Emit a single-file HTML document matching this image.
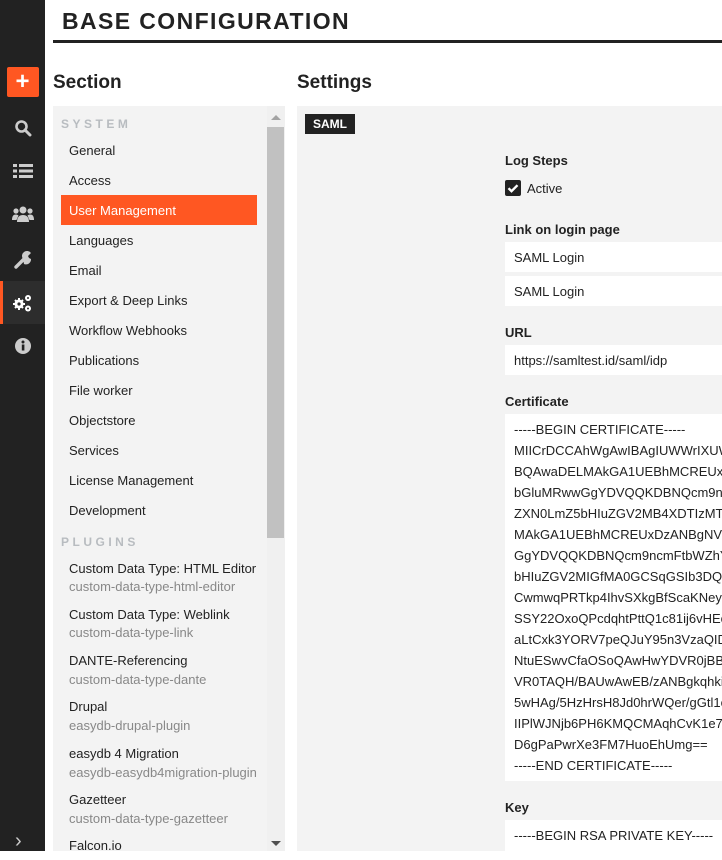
<!DOCTYPE html>
<html><head><meta charset="utf-8"><style>
*{box-sizing:border-box;margin:0;padding:0}
body{width:722px;height:851px;overflow:hidden;background:#fff;font-family:"Liberation Sans",sans-serif;color:#222;position:relative;font-size:13px}
.side{position:absolute;left:0;top:0;width:45px;height:851px;background:#222}
.ic{position:absolute;left:0;width:45px;height:43px;display:flex;align-items:center;justify-content:center}
.a{position:absolute;white-space:nowrap}
h1{position:absolute;left:62px;top:8px;font-size:23px;font-weight:bold;letter-spacing:1.4px}
.rule{position:absolute;left:53px;top:40px;width:669px;height:3px;background:#222}
h2{position:absolute;top:72px;font-size:19px;font-weight:bold}
.sec{position:absolute;left:53px;top:106px;width:232px;height:745px;background:#f3f3f3;overflow:hidden}
.it{position:absolute;left:16px;font-size:13px;margin-top:1px}
.grp{position:absolute;left:8px;font-size:12px;font-weight:bold;letter-spacing:3.5px;color:#b8bcc0;margin-top:1px}
.sub{color:#888}
.set{position:absolute;left:297px;top:106px;width:425px;height:745px;background:#f3f3f3}
.lbl{position:absolute;left:208px;font-weight:bold;font-size:13px;margin-top:1px}
.inp{position:absolute;left:208px;width:230px;background:#fff;padding-left:9px;font-size:13px}
</style></head><body>
<div class="side">
 <div class="ic" style="top:60px"><div style="width:32px;height:30px;background:#ff5722;border-radius:2px;color:#fff;font-weight:bold;font-size:24px;line-height:30px;text-align:center">+</div></div>
 <div class="ic" style="top:106px"><svg width="18" height="18" viewBox="0 0 18 18"><circle cx="7.5" cy="7.5" r="5" fill="none" stroke="#ccc" stroke-width="2.6"/><path d="M11 11l5 5" stroke="#ccc" stroke-width="3" stroke-linecap="round"/></svg></div>
 <div class="ic" style="top:149px"><svg width="20" height="16" viewBox="0 0 20 16"><g fill="#ccc"><rect x="0" y="1" width="4" height="3"/><rect x="6" y="1" width="14" height="3"/><rect x="0" y="6.5" width="4" height="3"/><rect x="6" y="6.5" width="14" height="3"/><rect x="0" y="12" width="4" height="3"/><rect x="6" y="12" width="14" height="3"/></g></svg></div>
 <div class="ic" style="top:192px"><svg width="22" height="18" viewBox="0 0 22 18"><g fill="#ccc"><circle cx="11" cy="5" r="3.5"/><circle cx="4" cy="6" r="2.6"/><circle cx="18" cy="6" r="2.6"/><path d="M5 17c0-5 2.5-7 6-7s6 2 6 7z"/><path d="M0 15c0-4 1.5-5.5 4-5.5 1 0 2 .5 2.5 1L4.5 15z"/><path d="M22 15c0-4-1.5-5.5-4-5.5-1 0-2 .5-2.5 1l2 4.5z"/></g></svg></div>
 <div class="ic" style="top:238px"><svg width="18" height="18" viewBox="0 0 18 18"><path d="M2 16l8-8" stroke="#ccc" stroke-width="3.4" stroke-linecap="round"/><path d="M9 8a5 5 0 0 1 8-6l-3 3 1 2 2 1 0-0a5 5 0 0 1-7 5z" fill="#ccc"/></svg></div>
 <div style="position:absolute;left:0;top:281px;width:45px;height:43px;background:#2d2d2d;border-left:3px solid #ff5722"></div>
 <div class="ic" style="top:281px"><svg width="22" height="20" viewBox="0 0 22 20"><g fill="#fff"><circle cx="7" cy="11" r="4.5"/><circle cx="16" cy="5" r="3"/><circle cx="16" cy="15.5" r="3"/></g><g fill="#2d2d2d"><circle cx="7" cy="11" r="1.6"/><circle cx="16" cy="5" r="1"/><circle cx="16" cy="15.5" r="1"/></g><g stroke="#fff" stroke-width="2"><path d="M7 5v12M1 11h12M3 7l8 8M11 7l-8 8"/></g><g fill="#2d2d2d"><circle cx="7" cy="11" r="1.6"/></g></svg></div>
 <div class="ic" style="top:324px"><svg width="18" height="18" viewBox="0 0 18 18"><circle cx="9" cy="9" r="8" fill="#ccc"/><rect x="7.8" y="7.5" width="2.6" height="6" fill="#222"/><circle cx="9" cy="5" r="1.5" fill="#222"/></svg></div>
 <div class="a" style="left:15px;top:830px;color:#ccc;font-size:20px">&#8250;</div>
</div>
<h1>BASE CONFIGURATION</h1>
<div class="rule"></div>
<h2 style="left:53px">Section</h2>
<h2 style="left:297px">Settings</h2>
<div class="sec">
 <div class="grp" style="top:10px">SYSTEM</div>
 <div class="it" style="top:36px">General</div>
 <div class="it" style="top:66px">Access</div>
 <div style="position:absolute;left:8px;top:89px;width:196px;height:30px;background:#ff5722"></div>
 <div class="it" style="top:96px;color:#fff">User Management</div>
 <div class="it" style="top:126px">Languages</div>
 <div class="it" style="top:156px">Email</div>
 <div class="it" style="top:186px">Export &amp; Deep Links</div>
 <div class="it" style="top:216px">Workflow Webhooks</div>
 <div class="it" style="top:246px">Publications</div>
 <div class="it" style="top:276px">File worker</div>
 <div class="it" style="top:306px">Objectstore</div>
 <div class="it" style="top:336px">Services</div>
 <div class="it" style="top:366px">License Management</div>
 <div class="it" style="top:396px">Development</div>
 <div class="grp" style="top:428px">PLUGINS</div>
 <div class="it" style="top:454px">Custom Data Type: HTML Editor</div>
 <div class="it sub" style="top:472px">custom-data-type-html-editor</div>
 <div class="it" style="top:500px">Custom Data Type: Weblink</div>
 <div class="it sub" style="top:518px">custom-data-type-link</div>
 <div class="it" style="top:546px">DANTE-Referencing</div>
 <div class="it sub" style="top:565px">custom-data-type-dante</div>
 <div class="it" style="top:592px">Drupal</div>
 <div class="it sub" style="top:611px">easydb-drupal-plugin</div>
 <div class="it" style="top:639px">easydb 4 Migration</div>
 <div class="it sub" style="top:658px;width:188px;overflow:hidden">easydb-easydb4migration-plugin</div>
 <div class="it" style="top:685px">Gazetteer</div>
 <div class="it sub" style="top:704px">custom-data-type-gazetteer</div>
 <div class="it" style="top:731px">Falcon.io</div>
 <div style="position:absolute;left:214px;top:0;width:18px;height:745px;background:#f0f0f0"></div>
 <div style="position:absolute;left:214px;top:21px;width:17px;height:411px;background:#c1c1c1"></div>
 <div style="position:absolute;left:218px;top:9px;border:5px solid transparent;border-bottom:5px solid #a3a3a3;border-top:0"></div>
 <div style="position:absolute;left:218px;top:735px;border:5px solid transparent;border-top:5px solid #505050;border-bottom:0"></div>
</div>
<div class="set">
 <div style="position:absolute;left:8px;top:8px;width:50px;height:20px;background:#222;color:#fff;font-weight:bold;font-size:12px;text-align:center;line-height:20px">SAML</div>
 <div class="lbl" style="top:46px">Log Steps</div>
 <div style="position:absolute;left:208px;top:74px;width:16px;height:16px;background:#222;border-radius:2px"><svg width="16" height="16" viewBox="0 0 16 16"><path d="M3.5 8.2l3 3 6-6" fill="none" stroke="#fff" stroke-width="2.4"/></svg></div>
 <div class="a" style="left:230px;top:75px">Active</div>
 <div class="lbl" style="top:115px">Link on login page</div>
 <div class="inp" style="top:136px;height:30px;line-height:32px">SAML Login</div>
 <div class="inp" style="top:170px;height:30px;line-height:32px">SAML Login</div>
 <div class="lbl" style="top:218px">URL</div>
 <div class="inp" style="top:239px;height:30px;line-height:32px">https://samltest.id/saml/idp</div>
 <div class="lbl" style="top:287px">Certificate</div>
 <div class="inp" style="top:308px;height:367px;line-height:21px;padding-top:5px;overflow:hidden;white-space:nowrap">-----BEGIN CERTIFICATE-----<br>MIICrDCCAhWgAwIBAgIUWWrIXUWE<br>BQAwaDELMAkGA1UEBhMCREUxDz<br>bGluMRwwGgYDVQQKDBNQcm9ncm<br>ZXN0LmZ5bHIuZGV2MB4XDTIzMTEx<br>MAkGA1UEBhMCREUxDzANBgNVBA<br>GgYDVQQKDBNQcm9ncmFtbWZhYm<br>bHIuZGV2MIGfMA0GCSqGSIb3DQEB<br>CwmwqPRTkp4IhvSXkgBfScaKNeyY<br>SSY22OxoQPcdqhtPttQ1c81ij6vHEc8<br>aLtCxk3YORV7peQJuY95n3VzaQIDA<br>NtuESwvCfaOSoQAwHwYDVR0jBBgw<br>VR0TAQH/BAUwAwEB/zANBgkqhkiG<br>5wHAg/5HzHrsH8Jd0hrWQer/gGtl1e<br>IIPlWJNjb6PH6KMQCMAqhCvK1e77s<br>D6gPaPwrXe3FM7HuoEhUmg==<br>-----END CERTIFICATE-----</div>
 <div class="lbl" style="top:693px">Key</div>
 <div class="inp" style="top:714px;height:40px;line-height:21px;padding-top:5px">-----BEGIN RSA PRIVATE KEY-----</div>
</div>
</body></html>
